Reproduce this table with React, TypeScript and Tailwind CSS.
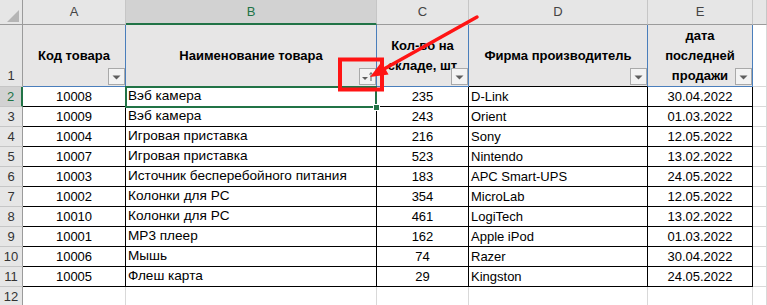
import React from 'react'

type Item = { code: string; name: string; qty: string; maker: string; date: string }

const items: Item[] = [
  { code: '10008', name: 'Вэб камера', qty: '235', maker: 'D-Link', date: '30.04.2022' },
  { code: '10009', name: 'Вэб камера', qty: '243', maker: 'Orient', date: '01.03.2022' },
  { code: '10004', name: 'Игровая приставка', qty: '216', maker: 'Sony', date: '12.05.2022' },
  { code: '10007', name: 'Игровая приставка', qty: '523', maker: 'Nintendo', date: '13.02.2022' },
  { code: '10003', name: 'Источник бесперебойного питания', qty: '183', maker: 'APC Smart-UPS', date: '24.05.2022' },
  { code: '10002', name: 'Колонки для PC', qty: '354', maker: 'MicroLab', date: '12.05.2022' },
  { code: '10010', name: 'Колонки для PC', qty: '461', maker: 'LogiTech', date: '13.02.2022' },
  { code: '10001', name: 'MP3 плеер', qty: '162', maker: 'Apple iPod', date: '01.03.2022' },
  { code: '10006', name: 'Мышь', qty: '74', maker: 'Razer', date: '30.04.2022' },
  { code: '10005', name: 'Флеш карта', qty: '29', maker: 'Kingston', date: '24.05.2022' },
]

const letters = ['A', 'B', 'C', 'D', 'E', '']

function FilterButton({ sorted = false }: { sorted?: boolean }) {
  return (
    <div className="absolute bottom-[1px] right-0 flex h-[17px] w-[17px] items-center justify-center border border-[#a9a9a9] bg-[#f3f3f3]">
      <svg width="15" height="15" viewBox="0 0 15 15">
        {sorted ? (
          <>
            <polygon points="2,8 8,8 5,11" fill="#5f5f5f" />
            <line x1="11" y1="4" x2="11" y2="12" stroke="#5f5f5f" strokeWidth="1" />
            <polyline points="9.5,5.5 11,3.5 12.5,5.5" fill="none" stroke="#5f5f5f" strokeWidth="1" />
          </>
        ) : (
          <polygon points="3.5,6.5 11.5,6.5 7.5,10.5" fill="#5f5f5f" />
        )}
      </svg>
    </div>
  )
}

function RowHead({ n, selected = false, tall = false }: { n: number; selected?: boolean; tall?: boolean }) {
  return (
    <div
      className={
        selected
          ? 'flex h-[20px] items-center justify-center border-b border-r-2 border-b-[#c6c6c6] border-r-[#217346] bg-[#d2d2d2] text-[#217346]'
          : tall
            ? 'flex h-[62px] items-end justify-center border-b border-r border-b-[#c6c6c6] border-r-[#9b9b9b] bg-[#e6e6e6] pb-[1px] text-[#333]'
            : 'flex h-[20px] items-center justify-center border-b border-r border-b-[#c6c6c6] border-r-[#9b9b9b] bg-[#e6e6e6] text-[#333]'
      }
    >
      {n}
    </div>
  )
}

export default function App() {
  return (
    <div className="relative h-[305px] w-[767px] overflow-hidden bg-white font-['Liberation_Sans',Arial,sans-serif] text-[13px] text-black">
      <div className="grid grid-cols-[23px_103px_251px_92px_179px_105px_1fr]">
        {/* column letters */}
        <div className="relative h-[25px] border-b border-r border-[#9b9b9b] bg-[#e6e6e6]">
          <svg className="absolute left-[7px] top-[10px]" width="12" height="12" viewBox="0 0 12 12">
            <polygon points="12,0 12,12 0,12" fill="#b5b5b5" />
          </svg>
        </div>
        {letters.map((l) =>
          l === 'B' ? (
            <div
              key={l}
              className="flex h-[25px] items-center justify-center border-b-2 border-r border-b-[#217346] border-r-[#c6c6c6] bg-[#d2d2d2] text-[#217346]"
            >
              {l}
            </div>
          ) : (
            <div
              key={l || 'F'}
              className="flex h-[25px] items-center justify-center border-b border-r border-b-[#9b9b9b] border-r-[#c6c6c6] bg-[#e6e6e6] text-[#444]"
            >
              {l}
            </div>
          ),
        )}

        {/* header row */}
        <RowHead n={1} tall />
        <div className="relative flex h-[62px] items-center justify-center border-b border-r border-[#4a7ebb] bg-[#e7e6e6] font-bold">
          Код товара
          <FilterButton />
        </div>
        <div className="relative flex h-[62px] items-center justify-center border-b border-r border-[#4a7ebb] bg-[#e7e6e6] font-bold">
          Наименование товара
          <FilterButton sorted />
        </div>
        <div className="relative flex h-[62px] items-center justify-center border-b border-r border-[#4a7ebb] bg-[#e7e6e6] text-center font-bold leading-[20px]">
          <span>
            Кол-во на
            <br />
            складе, шт
          </span>
          <FilterButton />
        </div>
        <div className="relative flex h-[62px] items-center justify-center border-b border-r border-b-black border-r-[#4a7ebb] bg-[#e7e6e6] font-bold">
          Фирма производитель
          <FilterButton />
        </div>
        <div className="relative flex h-[62px] items-center justify-center border-b border-r border-[#4a7ebb] bg-[#e7e6e6] text-center font-bold leading-[20px]">
          <span>
            дата
            <br />
            последней
            <br />
            продажи
          </span>
          <FilterButton />
        </div>
        <div className="h-[62px] border-b border-r border-[#d9d9d9]" />

        {/* data rows */}
        {items.map((it, i) => (
          <React.Fragment key={it.code}>
            <RowHead n={i + 2} selected={i === 0} />
            <div className="flex h-[20px] items-center justify-center border-b border-r border-black">{it.code}</div>
            <div className="flex h-[20px] items-center border-b border-r border-black pl-[2px] text-[13.6px]">{it.name}</div>
            <div className="flex h-[20px] items-center justify-center border-b border-r border-black">{it.qty}</div>
            <div className="flex h-[20px] items-center border-b border-r border-black pl-[2px]">{it.maker}</div>
            <div className="flex h-[20px] items-center justify-center border-b border-r border-black">{it.date}</div>
            <div className="h-[20px] border-b border-r border-[#d9d9d9]" />
          </React.Fragment>
        ))}

        {/* empty row 12 */}
        <RowHead n={12} />
        {[0, 1, 2, 3, 4, 5].map((k) => (
          <div key={k} className="h-[20px] border-b border-r border-[#d9d9d9]" />
        ))}
      </div>

      {/* active cell B2 */}
      <div className="absolute left-[125px] top-[86px] h-[22px] w-[252px] border-2 border-[#217346]" />
      <div className="absolute left-[373px] top-[104px] h-[7px] w-[7px] border border-white bg-[#217346]" />

      {/* red annotation */}
      <svg className="pointer-events-none absolute left-0 top-0" width="767" height="305" viewBox="0 0 767 305">
        <rect x="340" y="59.5" width="42" height="30" fill="none" stroke="#ff1414" strokeWidth="4" />
        <line x1="477" y1="17" x2="384" y2="69" stroke="#ff1414" strokeWidth="3.5" strokeLinecap="round" />
        <polygon points="370,77 381.5,62 388.5,74.5" fill="#ff1414" />
      </svg>
    </div>
  )
}
